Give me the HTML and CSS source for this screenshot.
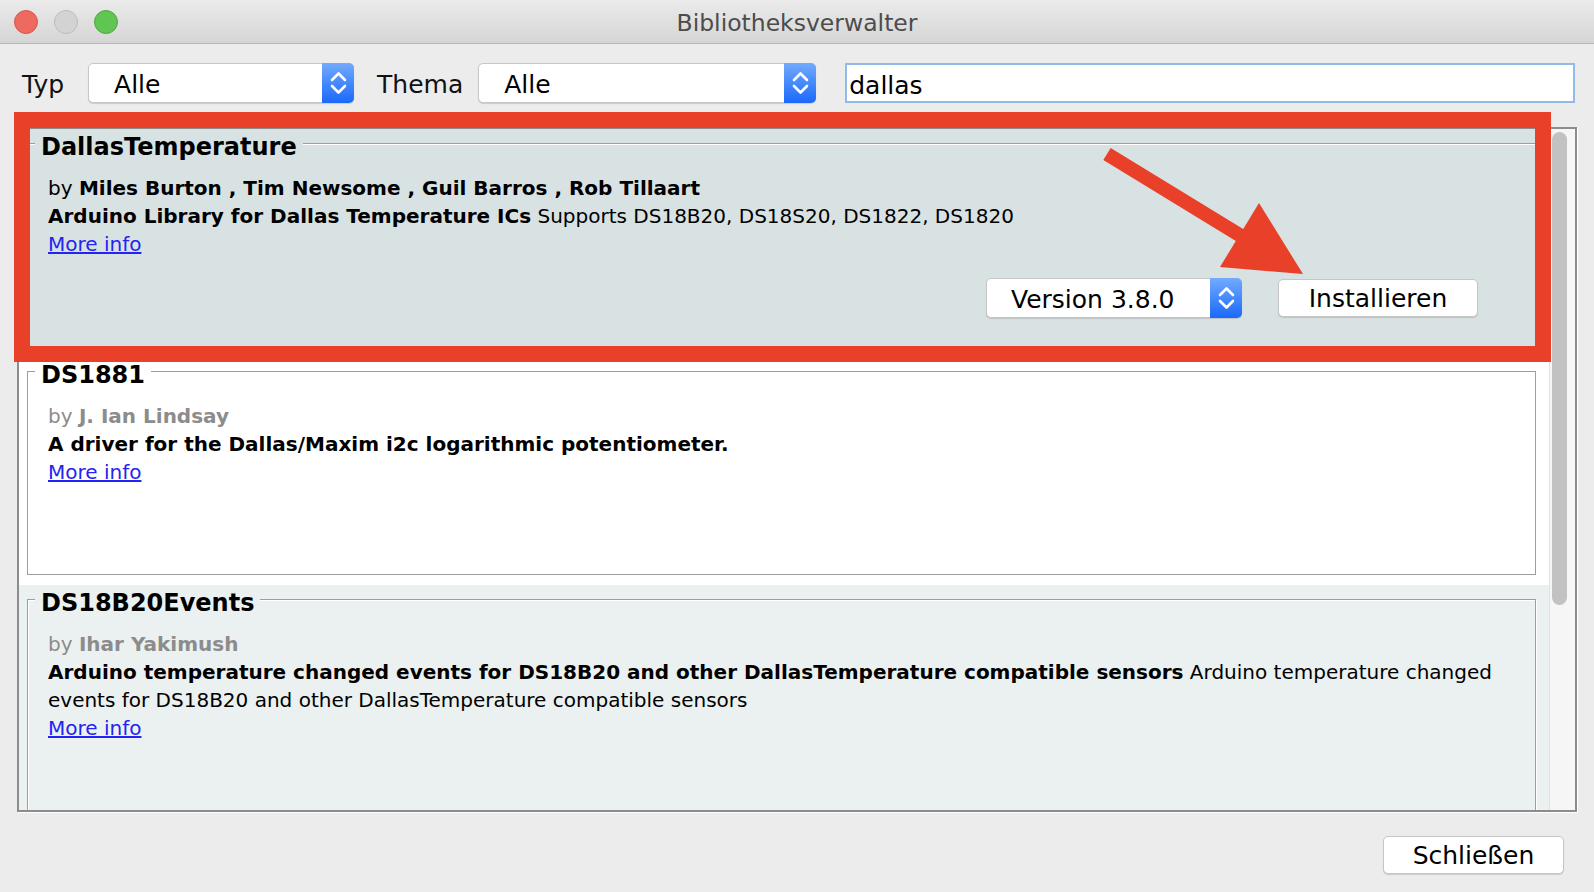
FILE: index.html
```html
<!DOCTYPE html>
<html lang="de">
<head>
<meta charset="utf-8">
<title>Bibliotheksverwalter</title>
<link rel="stylesheet" href="styles.css">
</head>
<body>
<div class="window">
  <header class="titlebar">
    <div class="lights">
      <span class="light light-close"></span>
      <span class="light light-min"></span>
      <span class="light light-max"></span>
    </div>
    <div class="title">Bibliotheksverwalter</div>
    <div></div>
  </header>

  <div class="toolbar">
    <span class="label label-typ">Typ</span>
    <div class="select select-typ">
      <span class="select-value">Alle</span>
      <span class="stepper"><svg viewBox="0 0 32 40" width="32" height="40"><path d="M10 17 L16.5 10.5 L23 17 M10 23 L16.5 29.5 L23 23" fill="none" stroke="#fff" stroke-width="2.6" stroke-linecap="round" stroke-linejoin="round"/></svg></span>
    </div>
    <span class="label label-thema">Thema</span>
    <div class="select select-thema">
      <span class="select-value">Alle</span>
      <span class="stepper"><svg viewBox="0 0 32 40" width="32" height="40"><path d="M10 17 L16.5 10.5 L23 17 M10 23 L16.5 29.5 L23 23" fill="none" stroke="#fff" stroke-width="2.6" stroke-linecap="round" stroke-linejoin="round"/></svg></span>
    </div>
    <div class="search">dallas</div>
  </div>

  <div class="pane">
    <div class="list">
      <div class="entry entry-selected">
        <fieldset class="box">
          <legend class="box-title">DallasTemperature</legend>
          <div class="box-body">
            <div class="byline">by <b>Miles Burton , Tim Newsome , Guil Barros , Rob Tillaart</b></div>
            <div class="desc"><b>Arduino Library for Dallas Temperature ICs</b> Supports DS18B20, DS18S20, DS1822, DS1820</div>
            <div class="more"><a href="#">More info</a></div>
            <div class="actions">
              <div class="select select-version">
                <span class="select-value">Version 3.8.0</span>
                <span class="stepper"><svg viewBox="0 0 32 40" width="32" height="40"><path d="M10 17 L16.5 10.5 L23 17 M10 23 L16.5 29.5 L23 23" fill="none" stroke="#fff" stroke-width="2.6" stroke-linecap="round" stroke-linejoin="round"/></svg></span>
              </div>
              <button class="btn btn-install">Installieren</button>
            </div>
          </div>
        </fieldset>
      </div>

      <div class="entry entry-plain">
        <fieldset class="box">
          <legend class="box-title">DS1881</legend>
          <div class="box-body">
            <div class="byline muted">by <b>J. Ian Lindsay</b></div>
            <div class="desc"><b>A driver for the Dallas/Maxim i2c logarithmic potentiometer.</b></div>
            <div class="more"><a href="#">More info</a></div>
            <div class="actions"></div>
          </div>
        </fieldset>
      </div>

      <div class="entry entry-alt">
        <fieldset class="box">
          <legend class="box-title">DS18B20Events</legend>
          <div class="box-body">
            <div class="byline muted">by <b>Ihar Yakimush</b></div>
            <div class="desc"><b>Arduino temperature changed events for DS18B20 and other DallasTemperature compatible sensors</b> Arduino temperature changed events for DS18B20 and other DallasTemperature compatible sensors</div>
            <div class="more"><a href="#">More info</a></div>
            <div class="actions"></div>
          </div>
        </fieldset>
      </div>
    </div>
    <div class="scrollbar"><div class="thumb"></div></div>
  </div>

  <footer class="footer">
    <button class="btn btn-close">Schließen</button>
  </footer>

  <div class="highlight"></div>
  <svg class="arrow" viewBox="0 0 1594 892" width="1594" height="892">
    <polygon points="1110.7,148 1243.2,229 1259,203 1303,274 1220,267 1235.8,241 1103.3,160" fill="#e94029"/>
  </svg>
</div>
</body>
</html>
```

FILE: styles.css
```css
html, body {
  margin: 0;
  padding: 0;
  background: #ececec;
}

body {
  font-family: "DejaVu Sans", "Noto Sans", sans-serif;
  color: #000;
}

.window {
  position: relative;
  width: 1594px;
  height: 892px;
  overflow: hidden;
  background: #ececec;
}

/* ---------- title bar ---------- */
.titlebar {
  height: 43px;
  border-bottom: 1px solid #b8b8b8;
  background: linear-gradient(#ebebeb, #d5d5d5);
  display: grid;
  grid-template-columns: 1fr auto 1fr;
  align-items: center;
}

.lights {
  display: flex;
  gap: 16px;
  padding-left: 14px;
}

.light {
  width: 24px;
  height: 24px;
  border-radius: 50%;
  box-sizing: border-box;
}

.light-close {
  background: #ee6a5e;
  border: 1px solid #d6564b;
}

.light-min {
  background: #d3d3d3;
  border: 1px solid #bcbcbc;
}

.light-max {
  background: #61c554;
  border: 1px solid #4ea83f;
}

.title {
  font-size: 23.5px;
  line-height: 26px;
  padding-top: 2px;
  color: #4c4c4c;
}

/* ---------- toolbar ---------- */
.toolbar {
  display: flex;
  align-items: center;
  height: 40px;
  padding: 19px 19px 24px 22px;
}

.label {
  font-size: 25px;
  line-height: 30px;
  padding-top: 4px;
  color: #111;
  margin-right: 20px;
}

.label-typ {
  margin-right: 24px;
}

.label-thema {
  margin-right: 15px;
}

.select {
  display: flex;
  height: 40px;
  box-sizing: border-box;
  border: 1px solid #c6c6c6;
  border-radius: 5px;
  background: #fff;
  box-shadow: 0 1px 1px rgba(0, 0, 0, 0.14);
}

.select-typ {
  width: 266px;
  margin-right: 23px;
}

.select-thema {
  width: 338px;
  margin-right: 29px;
}

.select-value {
  flex: 1;
  padding-left: 25px;
  font-size: 25px;
  line-height: 42px;
  color: #000;
  white-space: nowrap;
}

.stepper {
  width: 32px;
  margin: -1px -1px -1px 0;
  border-radius: 0 5px 5px 0;
  background: linear-gradient(#72aafe, #1b69fb);
  display: flex;
  align-items: center;
  justify-content: center;
}

.stepper svg {
  display: block;
}

.search {
  flex: 1;
  height: 40px;
  box-sizing: border-box;
  border: 2px solid #93b9ea;
  background: #fff;
  font-size: 25px;
  line-height: 42px;
  padding-left: 2px;
  color: #000;
  overflow: hidden;
}

/* ---------- list pane ---------- */
.pane {
  margin-left: 17px;
  width: 1560px;
  height: 685px;
  box-sizing: border-box;
  border: 2px solid #8c8c8c;
  box-shadow: 1px 1px 0 #fff;
  background: #fff;
  display: flex;
}

.list {
  flex: 1;
  overflow: hidden;
}

.scrollbar {
  width: 26px;
  box-sizing: border-box;
  background: #f6f6f6;
  border-left: 1px solid #e2e2e2;
  padding: 3px 0 0 2px;
}

.thumb {
  width: 15px;
  height: 473px;
  border-radius: 8px;
  background: #c2c2c2;
}

.entry {
  padding: 0 13px 10px 8px;
  background: var(--bg);
}

.entry-selected { --bg: #d9e2e3; }
.entry-plain { --bg: #ffffff; }
.entry-alt { --bg: #ebf0f0; }

.box {
  margin: 0;
  padding: 0;
  min-inline-size: 0;
  border: 1px solid #9e9e9e;
  box-shadow: inset 1px 1px 0 #fff, 1px 1px 0 #fff;
}

.box-title {
  margin-left: 7px;
  padding: 8px 6px 0;
  font-size: 24px;
  font-weight: bold;
  line-height: 20px;
  background: var(--bg);
  color: #000;
}

.box-body {
  padding: 17px 18px 28px 20px;
  font-size: 20px;
  line-height: 28px;
  color: #000;
}

.byline.muted {
  color: #8c8c8c;
}

.more a {
  color: #2424f2;
  text-decoration: underline;
}

.actions {
  display: flex;
  justify-content: flex-end;
  align-items: center;
  gap: 36px;
  height: 40px;
  margin-top: 20px;
  padding-right: 39px;
}

.select-version {
  width: 256px;
}

.select-version .select-value {
  padding-left: 24px;
}

.btn {
  height: 38px;
  box-sizing: border-box;
  border: 1px solid #c6c6c6;
  border-radius: 5px;
  background: #fff;
  box-shadow: 0 1px 1px rgba(0, 0, 0, 0.14);
  font-family: "DejaVu Sans", sans-serif;
  font-size: 25px;
  line-height: 36px;
  padding: 1px 0 0;
  color: #000;
}

.btn-install {
  width: 200px;
}

/* ---------- footer ---------- */
.footer {
  display: flex;
  justify-content: flex-end;
  padding: 24px 30px 0 0;
}

.btn-close {
  width: 181px;
}

/* ---------- annotation overlay ---------- */
.highlight {
  position: absolute;
  left: 14px;
  top: 112px;
  width: 1537px;
  height: 250px;
  box-sizing: border-box;
  border: 16px solid #e94029;
  pointer-events: none;
}

.arrow {
  position: absolute;
  left: 0;
  top: 0;
  pointer-events: none;
}
```
